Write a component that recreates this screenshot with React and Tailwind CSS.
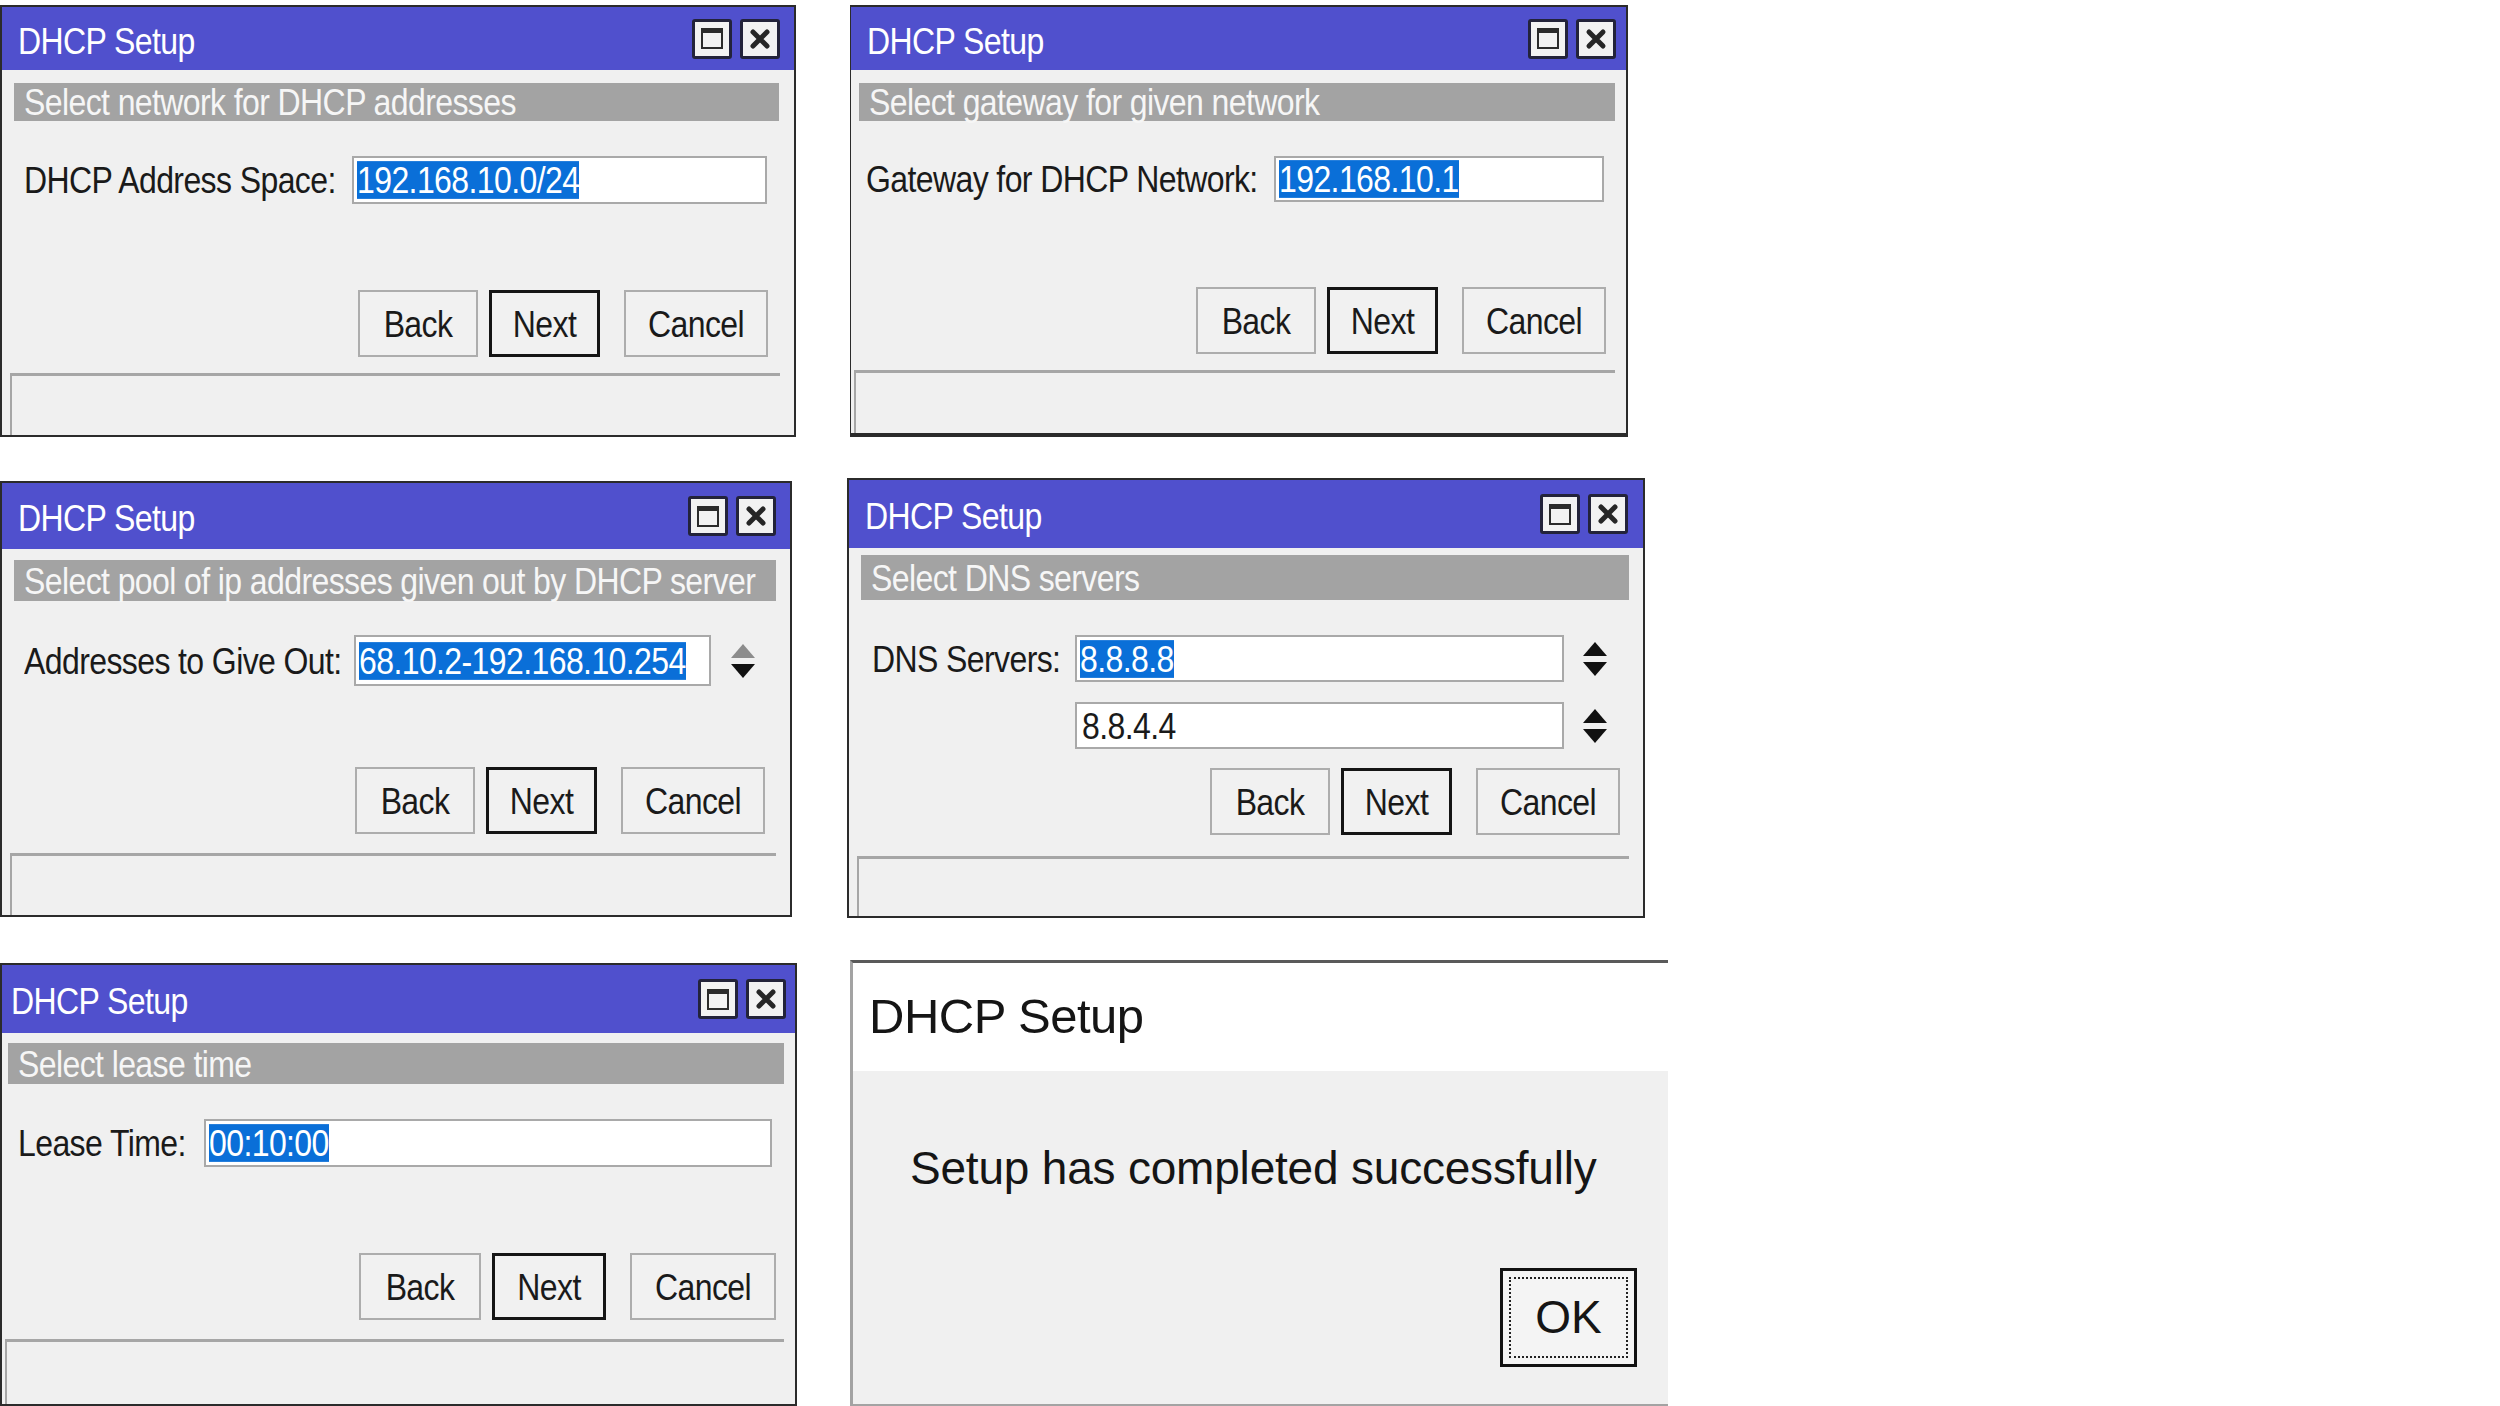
import React from "react";

const winFont = "font-['Liberation_Sans',Arial,sans-serif] text-[32px] tracking-[-0.6px]";

// winbox text in the shot is a bit stretched vertically
function T({ children, className = "" }) {
  return <span className={`inline-block scale-y-[1.18] whitespace-nowrap ${className}`}>{children}</span>;
}

function TitleButtons() {
  return (
    <div className="flex gap-[8px]">
      <div className="w-[40px] h-[40px] rounded-[3px] border-[3px] border-[#23233a] bg-[#f2f2f2] flex items-center justify-center">
        <div className="w-[22px] h-[21px] border-2 border-t-[5px] border-[#2b2b2b]" />
      </div>
      <div className="w-[40px] h-[40px] rounded-[3px] border-[3px] border-[#23233a] bg-[#f2f2f2] flex items-center justify-center">
        <svg width="22" height="22" viewBox="0 0 22 22">
          <path d="M4 4 L18 18 M18 4 L4 18" stroke="#262626" strokeWidth="5" strokeLinecap="round" />
        </svg>
      </div>
    </div>
  );
}

function TitleBar({ className }) {
  return (
    <div className={`flex items-center justify-between bg-[#5050cd] text-white ${className}`}>
      <T className="mt-[4px]">DHCP Setup</T>
      <TitleButtons />
    </div>
  );
}

function Band({ className, children }) {
  return (
    <div className={`flex items-center bg-[#a3a3a3] text-[#f6f6f6] pl-[10px] ${className}`}>
      <T>{children}</T>
    </div>
  );
}

function Field({ className, value, selected }) {
  return (
    <div className={`flex flex-none items-center border-2 border-[#a9a9a9] bg-white pl-[3px] overflow-hidden ${className}`}>
      {selected ? (
        <T className="bg-[#0a6fd8] text-white leading-[32px]">{value}</T>
      ) : (
        <T className="text-[#1a1a1a] leading-[32px] pl-[2px]">{value}</T>
      )}
    </div>
  );
}

function Spinner({ upGray, className }) {
  return (
    <svg width="26" height="40" viewBox="0 0 26 40" className={className}>
      <path d="M13 3 L25 17 L1 17 Z" fill={upGray ? "#8c8c8c" : "#111"} />
      <path d="M1 23 L25 23 L13 37 Z" fill="#111" />
    </svg>
  );
}

function Buttons({ className, wide }) {
  const base = "flex items-center justify-center bg-[#f1f1f1] text-[#1a1a1a] h-[67px]";
  return (
    <div className={`flex justify-end ${className}`}>
      <div className={`${base} ${wide ? "w-[122px]" : "w-[120px]"} border-2 border-[#adadad]`}>
        <T>Back</T>
      </div>
      <div className={`${base} ${wide ? "w-[114px]" : "w-[111px]"} ml-[11px] border-[3px] border-[#151515]`}>
        <T>Next</T>
      </div>
      <div className={`${base} ${wide ? "w-[146px]" : "w-[144px]"} ml-[24px] border-2 border-[#adadad]`}>
        <T>Cancel</T>
      </div>
    </div>
  );
}

function Status({ className }) {
  return <div className={`flex-1 border-t-[3px] border-l-2 border-[#a6a6a6] ${className}`} />;
}

function Win({ className, children }) {
  return (
    <div className={`flex flex-col bg-[#f0f0f0] text-[#1a1a1a] ${winFont} ${className}`}>
      {children}
    </div>
  );
}

export default function App() {
  return (
    <div className="w-[2500px] h-[1406px] bg-white overflow-hidden flex items-start">
      {/* left column */}
      <div className="flex flex-col w-[800px]">
        <Win className="mt-[5px] w-[796px] h-[432px] border-2 border-[#2b2b2b]">
          <TitleBar className="h-[63px] pl-[16px] pr-[14px]" />
          <Band className="mt-[13px] h-[38px] ml-[12px] mr-[15px]">Select network for DHCP addresses</Band>
          <div className="mt-[35px] h-[48px] flex items-center pl-[22px]">
            <T>DHCP Address Space:</T>
            <Field className="ml-auto mr-[27px] w-[415px] h-[48px]" value="192.168.10.0/24" selected />
          </div>
          <Buttons className="mt-[86px] pr-[26px]" />
          <Status className="mt-[16px] ml-[8px] mr-[14px]" />
        </Win>

        <Win className="mt-[44px] w-[792px] h-[436px] border-2 border-[#2b2b2b]">
          <TitleBar className="h-[66px] pl-[16px] pr-[14px]" />
          <Band className="mt-[11px] h-[41px] ml-[12px] mr-[14px]">Select pool of ip addresses given out by DHCP server</Band>
          <div className="mt-[34px] h-[51px] flex items-center pl-[22px]">
            <T>Addresses to Give Out:</T>
            <Field className="ml-auto w-[357px] h-[51px]" value="68.10.2-192.168.10.254" selected />
            <Spinner upGray className="ml-[19px] mr-[34px]" />
          </div>
          <Buttons className="mt-[81px] pr-[25px]" />
          <Status className="mt-[19px] ml-[8px] mr-[14px]" />
        </Win>

        <Win className="mt-[46px] w-[797px] h-[443px] border-2 border-[#2b2b2b]">
          <TitleBar className="h-[68px] pl-[9px] pr-[9px]" />
          <Band className="mt-[10px] h-[41px] ml-[6px] mr-[11px]">Select lease time</Band>
          <div className="mt-[35px] h-[48px] flex items-center pl-[16px]">
            <T>Lease Time:</T>
            <Field className="ml-auto mr-[23px] w-[568px] h-[48px]" value="00:10:00" selected />
          </div>
          <Buttons wide className="mt-[86px] pr-[19px]" />
          <Status className="mt-[19px] ml-[3px] mr-[11px]" />
        </Win>
      </div>

      {/* right column */}
      <div className="flex flex-col ml-[46px]">
        <Win className="ml-[4px] mt-[5px] w-[778px] h-[432px] border-t-2 border-r-2 border-b-[4px] border-l border-[#2b2b2b]">
          <TitleBar className="h-[63px] pl-[16px] pr-[10px]" />
          <Band className="mt-[13px] h-[38px] ml-[8px] mr-[11px]">Select gateway for given network</Band>
          <div className="mt-[35px] h-[46px] flex items-center pl-[15px]">
            <T>Gateway for DHCP Network:</T>
            <Field className="ml-auto mr-[22px] w-[330px] h-[46px]" value="192.168.10.1" selected />
          </div>
          <Buttons className="mt-[85px] pr-[20px]" />
          <Status className="mt-[16px] ml-[3px] mr-[11px]" />
        </Win>

        <Win className="ml-[1px] mt-[41px] w-[798px] h-[440px] border-2 border-[#2b2b2b]">
          <TitleBar className="h-[68px] pl-[16px] pr-[15px]" />
          <Band className="mt-[7px] h-[45px] ml-[12px] mr-[14px]">Select DNS servers</Band>
          <div className="mt-[35px] h-[47px] flex items-center pl-[23px]">
            <T>DNS Servers:</T>
            <Field className="ml-auto w-[489px] h-[47px]" value="8.8.8.8" selected />
            <Spinner className="ml-[18px] mr-[35px]" />
          </div>
          <div className="mt-[20px] h-[47px] flex items-center">
            <Field className="ml-auto w-[489px] h-[47px]" value="8.8.4.4" />
            <Spinner className="ml-[18px] mr-[35px]" />
          </div>
          <Buttons className="mt-[19px] pr-[23px]" />
          <Status className="mt-[21px] ml-[8px] mr-[14px]" />
        </Win>

        {/* final message box */}
        <div className="ml-[4px] mt-[42px] w-[818px] h-[446px] flex flex-col border-t-[3px] border-t-[#5a5a5a] border-l-[3px] border-l-[#a3a3a3] border-b-2 border-b-[#a3a3a3] font-['Liberation_Sans',Arial,sans-serif] text-[#151515]">
          <div className="h-[108px] bg-white flex items-center pl-[16px] text-[49px] tracking-[-0.5px]">
            DHCP Setup
          </div>
          <div className="flex-1 bg-[#f0f0f0] flex flex-col">
            <div className="mt-[70px] pl-[57px] text-[46px] leading-[54px] tracking-[-0.2px]">
              Setup has completed successfully
            </div>
            <div className="mt-[73px] mr-[31px] self-end w-[137px] h-[99px] border-[3px] border-[#111] bg-[#f4f4f4] p-[6px]">
              <div className="h-full border-2 border-dotted border-[#222] flex items-center justify-center text-[46px]">
                OK
              </div>
            </div>
          </div>
        </div>
      </div>
    </div>
  );
}
